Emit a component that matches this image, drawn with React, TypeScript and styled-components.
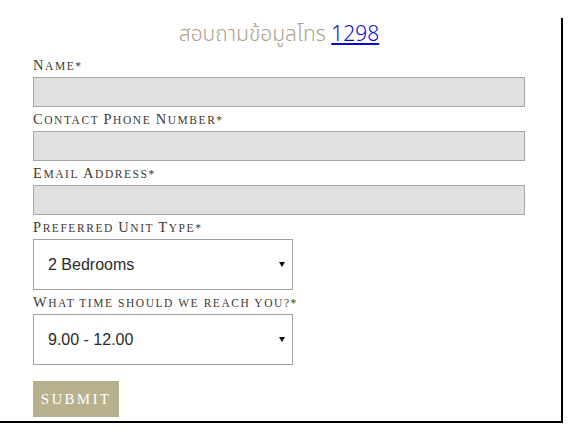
import React from "react";
import styled, { createGlobalStyle } from "styled-components";

const Global = createGlobalStyle`
  html, body { margin: 0; padding: 0; background: #ffffff; }
  body { font-family: "Liberation Sans", Arial, sans-serif; }
`;

const Page = styled.div`
  padding-top: 18px;
`;

const Panel = styled.div`
  box-sizing: border-box;
  width: 563px;
  border-right: 2px solid #000;
  border-bottom: 2px solid #000;
  padding: 0 36px 4px 33px;
`;

const Title = styled.h2`
  margin: 0;
  height: 35px;
  line-height: 33px;
  text-align: center;
  font-family: "Noto Sans Thai", "Noto Sans", "DejaVu Sans", sans-serif;
  font-weight: 300;
  font-size: 21px;
  color: #aca38d;
`;

const PhoneLink = styled.a`
  color: #0a0ad6;
  text-decoration: underline;
`;

const Form = styled.form`
  display: flex;
  flex-direction: column;
`;

const Label = styled.label`
  display: block;
  height: 20px;
  padding-top: 2px;
  margin-bottom: 2px;
  line-height: 20px;
  font-family: "Liberation Serif", "Times New Roman", serif;
  font-size: 14.5px;
  letter-spacing: 1.55px;
  color: #3e3a33;
  white-space: nowrap;
`;

const Cap = styled.span`
  font-size: 14.5px;
  line-height: 1;
`;

const Small = styled.span`
  font-size: 11.5px;
  line-height: 1;
  text-transform: uppercase;
`;

const TextInput = styled.input`
  display: block;
  box-sizing: border-box;
  width: 492px;
  height: 30px;
  margin: 0;
  background: #e0e0e0;
  border: 1px solid #a6a6a6;
  outline: none;
`;

const SelectWrap = styled.div`
  position: relative;
  width: 260px;
  &::after {
    content: "";
    position: absolute;
    right: 8px;
    top: 23px;
    width: 0;
    height: 0;
    border-left: 3px solid transparent;
    border-right: 3px solid transparent;
    border-top: 5px solid #111;
    pointer-events: none;
  }
`;

const Select = styled.select`
  display: block;
  box-sizing: border-box;
  width: 260px;
  height: 51px;
  margin: 0;
  padding: 0 0 0 14px;
  appearance: none;
  -webkit-appearance: none;
  background: #fff;
  border: 1px solid #a3a3a3;
  border-radius: 0;
  font-family: "Liberation Sans", Arial, sans-serif;
  font-size: 16px;
  color: #2a2a2a;
  outline: none;
`;

const SubmitButton = styled.button`
  margin-top: 16px;
  align-self: flex-start;
  box-sizing: border-box;
  width: 86px;
  height: 36px;
  padding: 0;
  border: none;
  border-radius: 0;
  background: #b8b18e;
  color: #ffffff;
  font-family: "Liberation Serif", "Times New Roman", serif;
  font-size: 15px;
  letter-spacing: 2.3px;
  text-transform: uppercase;
`;

const SmallCaps = ({ text }: { text: string }) => {
  const parts: React.ReactNode[] = [];
  text.split(/(\s+)/).forEach((word, i) => {
    if (!word) return;
    const first = word[0];
    if (/[A-Z]/.test(first)) {
      parts.push(<Cap key={`c${i}`}>{first}</Cap>);
      if (word.length > 1) parts.push(<Small key={`s${i}`}>{word.slice(1)}</Small>);
    } else {
      parts.push(<Small key={`s${i}`}>{word}</Small>);
    }
  });
  return <>{parts}</>;
};

type FieldProps = { label: string; children: React.ReactNode };

const Field = ({ label, children }: FieldProps) => (
  <>
    <Label>
      <SmallCaps text={label} />
    </Label>
    {children}
  </>
);

export default function App() {
  return (
    <>
      <Global />
      <Page>
        <Panel>
          <Title>
            สอบถามข้อมูลโทร <PhoneLink href="#">1298</PhoneLink>
          </Title>
          <Form onSubmit={(e) => e.preventDefault()}>
            <Field label="Name*">
              <TextInput type="text" />
            </Field>
            <Field label="Contact Phone Number*">
              <TextInput type="tel" />
            </Field>
            <Field label="Email Address*">
              <TextInput type="email" />
            </Field>
            <Field label="Preferred Unit Type*">
              <SelectWrap>
                <Select defaultValue="2">
                  <option value="1">1 Bedroom</option>
                  <option value="2">2 Bedrooms</option>
                  <option value="3">3 Bedrooms</option>
                </Select>
              </SelectWrap>
            </Field>
            <Field label="What time should we reach you?*">
              <SelectWrap>
                <Select defaultValue="a">
                  <option value="a">9.00 - 12.00</option>
                  <option value="b">12.00 - 15.00</option>
                  <option value="c">15.00 - 18.00</option>
                </Select>
              </SelectWrap>
            </Field>
            <SubmitButton type="submit">Submit</SubmitButton>
          </Form>
        </Panel>
      </Page>
    </>
  );
}
